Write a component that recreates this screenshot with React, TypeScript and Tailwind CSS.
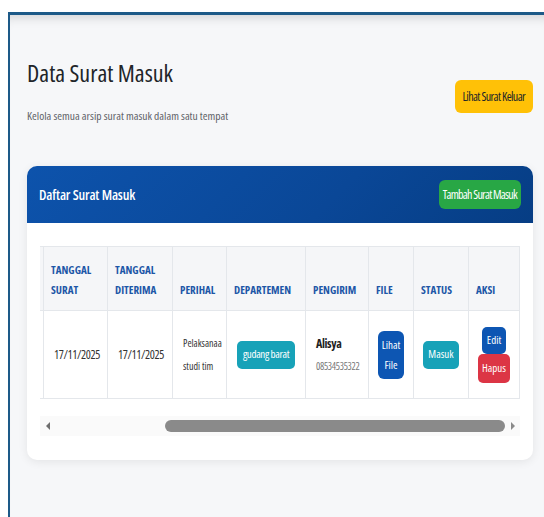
import { useLayoutEffect, useRef } from "react";

type Surat = {
  no: number;
  nomor: string;
  tanggalSurat: string;
  tanggalDiterima: string;
  perihal: string;
  departemen: string;
  pengirim: string;
  telepon: string;
  status: string;
};

const SURAT: Surat[] = [
  {
    no: 1,
    nomor: "001/SM/XI/2025",
    tanggalSurat: "17/11/2025",
    tanggalDiterima: "17/11/2025",
    perihal: "Pelaksanaa studi tim",
    departemen: "gudang barat",
    pengirim: "Alisya",
    telepon: "08534535322",
    status: "Masuk",
  },
];

export default function App() {
  const scrollRef = useRef<HTMLDivElement>(null);

  // the table starts scrolled all the way to the right
  useLayoutEffect(() => {
    const el = scrollRef.current;
    if (el) el.scrollLeft = el.scrollWidth;
  }, []);

  return (
    <div className="h-[517px] overflow-hidden bg-white pt-[12px] pl-[8px] font-['Open_Sans',sans-serif] [font-stretch:condensed]">
      <main className="h-[505px] border-t-[3px] border-l-[2px] border-[#1d5a88] bg-[#f6f7f9] pt-[42px] pl-[17px] pr-[11px] shadow-[inset_0_12px_12px_-10px_rgba(0,0,0,0.16)]">
        {/* Page header */}
        <div className="flex items-start justify-between">
          <div>
            <h1 className="text-[24px] leading-[32px] font-medium text-[#212529]">Data Surat Masuk</h1>
            <p className="mt-[19px] text-[11.5px] leading-[16px] text-[#5f6368]">
              Kelola semua arsip surat masuk dalam satu tempat
            </p>
          </div>
          <button className="mt-[23px] h-[33px] rounded-[6px] bg-[#ffc107] px-[8px] text-[12px] tracking-[-0.05em] text-[#212529]">
            Lihat Surat Keluar
          </button>
        </div>

        {/* Card */}
        <div className="mt-[42px] overflow-hidden rounded-[10px] bg-white shadow-[0_2px_10px_rgba(0,0,0,0.08)]">
          <div className="flex h-[57px] items-center justify-between bg-[linear-gradient(135deg,#0d53ac_0%,#0a4797_60%,#063d84_100%)] px-[12px]">
            <h2 className="text-[14px] font-semibold tracking-[-0.01em] text-white">Daftar Surat Masuk</h2>
            <button className="h-[29px] rounded-[6px] bg-[#28a745] px-[4px] text-[12px] tracking-[-0.06em] text-white">
              Tambah Surat Masuk
            </button>
          </div>

          <div className="px-[13px] pt-[23px] pb-[24px]">
            <div ref={scrollRef} className="overflow-x-auto [scrollbar-width:none]">
              <table className="mb-[17px] w-[635px] table-fixed border-collapse text-[#333]">
                <colgroup>
                  <col className="w-[40px]" />
                  <col className="w-[119px]" />
                  <col className="w-[64px]" />
                  <col className="w-[65px]" />
                  <col className="w-[54px]" />
                  <col className="w-[79px]" />
                  <col className="w-[63px]" />
                  <col className="w-[45px]" />
                  <col className="w-[55px]" />
                  <col className="w-[51px]" />
                </colgroup>
                <thead>
                  <tr className="bg-[#f5f6f8] text-left align-bottom text-[11px] leading-[20px] font-bold text-[#1d57a7]">
                    <th className="border border-[#e4e7eb] px-[7px] pt-[13px] pb-[10px]">NO</th>
                    <th className="border border-[#e4e7eb] px-[7px] pt-[13px] pb-[10px]">NOMOR SURAT</th>
                    <th className="border border-[#e4e7eb] px-[7px] pt-[13px] pb-[10px]">TANGGAL SURAT</th>
                    <th className="border border-[#e4e7eb] px-[7px] pt-[13px] pb-[10px]">TANGGAL DITERIMA</th>
                    <th className="border border-[#e4e7eb] px-[7px] pt-[13px] pb-[10px]">PERIHAL</th>
                    <th className="border border-[#e4e7eb] px-[7px] pt-[13px] pb-[10px]">DEPARTEMEN</th>
                    <th className="border border-[#e4e7eb] px-[7px] pt-[13px] pb-[10px]">PENGIRIM</th>
                    <th className="border border-[#e4e7eb] px-[7px] pt-[13px] pb-[10px]">FILE</th>
                    <th className="border border-[#e4e7eb] px-[7px] pt-[13px] pb-[10px]">STATUS</th>
                    <th className="border border-[#e4e7eb] px-[7px] pt-[13px] pb-[10px]">AKSI</th>
                  </tr>
                </thead>
                <tbody>
                  {SURAT.map((s) => (
                    <tr key={s.no} className="h-[88px] align-middle">
                      <td className="border border-[#e4e7eb] px-[10px] text-[12px]">{s.no}</td>
                      <td className="border border-[#e4e7eb] px-[10px] text-[12px]">{s.nomor}</td>
                      <td className="border border-[#e4e7eb] px-[10px] text-[12px] tracking-[-0.03em]">{s.tanggalSurat}</td>
                      <td className="border border-[#e4e7eb] px-[10px] text-[12px] tracking-[-0.03em]">{s.tanggalDiterima}</td>
                      <td className="border border-[#e4e7eb] px-[10px] text-[10px] leading-[23px]">{s.perihal}</td>
                      <td className="border border-[#e4e7eb] px-[4px] text-center">
                        <span className="inline-flex h-[28px] items-center rounded-[5px] bg-[#17a2b8] px-[6px] text-[11px] tracking-[-0.03em] text-white">
                          {s.departemen}
                        </span>
                      </td>
                      <td className="border border-[#e4e7eb] px-[10px]">
                        <div className="text-[12px] leading-[22px] font-bold tracking-[-0.03em] text-[#222]">{s.pengirim}</div>
                        <div className="text-[10px] leading-[22px] tracking-[-0.03em] text-[#777]">{s.telepon}</div>
                      </td>
                      <td className="border border-[#e4e7eb] px-[4px] text-center">
                        <button className="w-[26px] rounded-[6px] bg-[#0d56b3] py-[4px] text-[11px] leading-[20px] text-white">
                          Lihat File
                        </button>
                      </td>
                      <td className="border border-[#e4e7eb] px-[4px] text-center">
                        <span className="inline-flex h-[28px] items-center rounded-[5px] bg-[#17a2b8] px-[5px] text-[11px] text-white">
                          {s.status}
                        </span>
                      </td>
                      <td className="border border-[#e4e7eb] px-[4px]">
                        <div className="flex flex-col items-center">
                          <button className="h-[27px] rounded-[5px] bg-[#0d56b3] px-[5px] text-[11px] text-white">Edit</button>
                          <button className="h-[29px] rounded-[5px] bg-[#dc3545] px-[4px] text-[11px] text-white">Hapus</button>
                        </div>
                      </td>
                    </tr>
                  ))}
                </tbody>
              </table>
            </div>

            {/* Horizontal scrollbar */}
            <div className="flex h-[20px] items-center bg-[#fafafa]">
              <div className="flex w-[15px] justify-center">
                <svg width="4" height="8" viewBox="0 0 4 8">
                  <path d="M4 0 L0 4 L4 8 Z" fill="#6e6e6e" />
                </svg>
              </div>
              <div className="flex flex-1 items-center pl-[110px]">
                <div className="h-[12px] flex-1 rounded-full bg-[#8a8a8a]" />
              </div>
              <div className="flex w-[15px] justify-center">
                <svg width="4" height="8" viewBox="0 0 4 8">
                  <path d="M0 0 L4 4 L0 8 Z" fill="#8a8a8a" />
                </svg>
              </div>
            </div>
          </div>
        </div>
      </main>
    </div>
  );
}
